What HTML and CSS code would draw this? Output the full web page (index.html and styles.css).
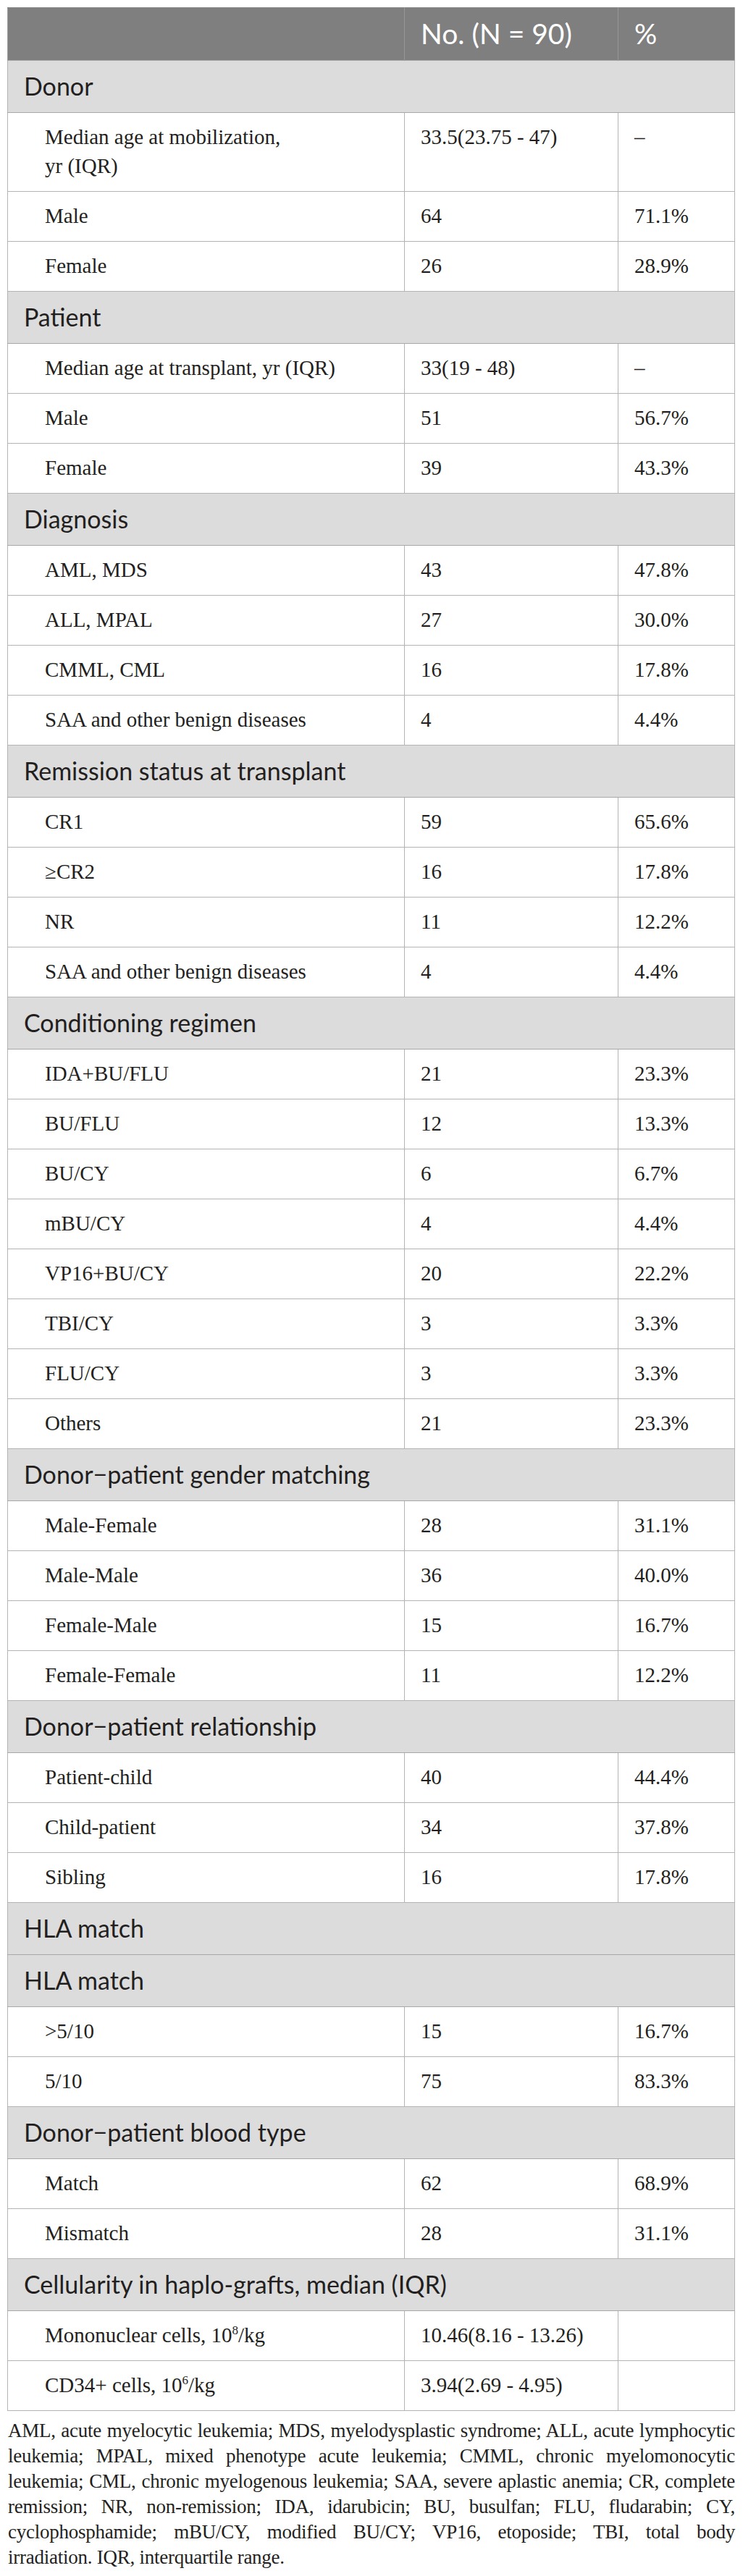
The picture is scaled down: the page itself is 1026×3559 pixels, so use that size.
FILE: index.html
```html
<!DOCTYPE html>
<html lang="en">
<head>
<meta charset="utf-8">
<title>Table</title>
<link rel="stylesheet" href="styles.css">
</head>
<body>
<div class="wrap">
<table class="tbl">
  <thead>
    <tr class="head"><th></th><th>No. (N = 90)</th><th>%</th></tr>
  </thead>
  <tbody>
    <tr class="sec"><td colspan="3">Donor</td></tr>
    <tr><td class="lbl">Median age at mobilization,<br>yr (IQR)</td><td>33.5(23.75 - 47)</td><td>–</td></tr>
    <tr><td class="lbl">Male</td><td>64</td><td>71.1%</td></tr>
    <tr><td class="lbl">Female</td><td>26</td><td>28.9%</td></tr>

    <tr class="sec"><td colspan="3">Patient</td></tr>
    <tr><td class="lbl">Median age at transplant, yr (IQR)</td><td>33(19 - 48)</td><td>–</td></tr>
    <tr><td class="lbl">Male</td><td>51</td><td>56.7%</td></tr>
    <tr><td class="lbl">Female</td><td>39</td><td>43.3%</td></tr>

    <tr class="sec"><td colspan="3">Diagnosis</td></tr>
    <tr><td class="lbl">AML, MDS</td><td>43</td><td>47.8%</td></tr>
    <tr><td class="lbl">ALL, MPAL</td><td>27</td><td>30.0%</td></tr>
    <tr><td class="lbl">CMML, CML</td><td>16</td><td>17.8%</td></tr>
    <tr><td class="lbl">SAA and other benign diseases</td><td>4</td><td>4.4%</td></tr>

    <tr class="sec"><td colspan="3">Remission status at transplant</td></tr>
    <tr><td class="lbl">CR1</td><td>59</td><td>65.6%</td></tr>
    <tr><td class="lbl">≥CR2</td><td>16</td><td>17.8%</td></tr>
    <tr><td class="lbl">NR</td><td>11</td><td>12.2%</td></tr>
    <tr><td class="lbl">SAA and other benign diseases</td><td>4</td><td>4.4%</td></tr>

    <tr class="sec"><td colspan="3">Conditioning regimen</td></tr>
    <tr><td class="lbl">IDA+BU/FLU</td><td>21</td><td>23.3%</td></tr>
    <tr><td class="lbl">BU/FLU</td><td>12</td><td>13.3%</td></tr>
    <tr><td class="lbl">BU/CY</td><td>6</td><td>6.7%</td></tr>
    <tr><td class="lbl">mBU/CY</td><td>4</td><td>4.4%</td></tr>
    <tr><td class="lbl">VP16+BU/CY</td><td>20</td><td>22.2%</td></tr>
    <tr><td class="lbl">TBI/CY</td><td>3</td><td>3.3%</td></tr>
    <tr><td class="lbl">FLU/CY</td><td>3</td><td>3.3%</td></tr>
    <tr><td class="lbl">Others</td><td>21</td><td>23.3%</td></tr>

    <tr class="sec"><td colspan="3">Donor−patient gender matching</td></tr>
    <tr><td class="lbl">Male-Female</td><td>28</td><td>31.1%</td></tr>
    <tr><td class="lbl">Male-Male</td><td>36</td><td>40.0%</td></tr>
    <tr><td class="lbl">Female-Male</td><td>15</td><td>16.7%</td></tr>
    <tr><td class="lbl">Female-Female</td><td>11</td><td>12.2%</td></tr>

    <tr class="sec"><td colspan="3">Donor−patient relationship</td></tr>
    <tr><td class="lbl">Patient-child</td><td>40</td><td>44.4%</td></tr>
    <tr><td class="lbl">Child-patient</td><td>34</td><td>37.8%</td></tr>
    <tr><td class="lbl">Sibling</td><td>16</td><td>17.8%</td></tr>

    <tr class="sec"><td colspan="3">HLA match</td></tr>
    <tr class="sec"><td colspan="3">HLA match</td></tr>
    <tr><td class="lbl">&gt;5/10</td><td>15</td><td>16.7%</td></tr>
    <tr><td class="lbl">5/10</td><td>75</td><td>83.3%</td></tr>

    <tr class="sec"><td colspan="3">Donor−patient blood type</td></tr>
    <tr><td class="lbl">Match</td><td>62</td><td>68.9%</td></tr>
    <tr><td class="lbl">Mismatch</td><td>28</td><td>31.1%</td></tr>

    <tr class="sec"><td colspan="3">Cellularity in haplo-grafts, median (IQR)</td></tr>
    <tr><td class="lbl">Mononuclear cells, 10<sup>8</sup>/kg</td><td>10.46(8.16 - 13.26)</td><td></td></tr>
    <tr><td class="lbl">CD34+ cells, 10<sup>6</sup>/kg</td><td>3.94(2.69 - 4.95)</td><td></td></tr>
  </tbody>
</table>
<p class="note"><span class="ln">AML, acute myelocytic leukemia; MDS, myelodysplastic syndrome; ALL, acute lymphocytic</span> <span class="ln">leukemia; MPAL, mixed phenotype acute leukemia; CMML, chronic myelomonocytic</span> <span class="ln">leukemia; CML, chronic myelogenous leukemia; SAA, severe aplastic anemia; CR, complete</span> <span class="ln">remission; NR, non-remission; IDA, idarubicin; BU, busulfan; FLU, fludarabin; CY,</span> <span class="ln">cyclophosphamide; mBU/CY, modified BU/CY; VP16, etoposide; TBI, total body</span> <span class="ln ln-last">irradiation. IQR, interquartile range.</span></p>
</div>
</body>
</html>
```

FILE: styles.css
```css
html, body {
  margin: 0;
  padding: 0;
  background: #ffffff;
}

.wrap {
  padding: 10px 11px 0 10px;
}

.tbl {
  width: 1005px;
  border-collapse: collapse;
  table-layout: fixed;
  font-family: "Liberation Serif", "Times New Roman", serif;
  font-size: 29px;
  color: #231f20;
}

.tbl th:nth-child(1), .tbl td:nth-child(1) { width: 503px; }
.tbl th:nth-child(2), .tbl td:nth-child(2) { width: 250px; }

.head th {
  background: #7f7f7f;
  color: #ffffff;
  font-family: "Lato", "Noto Sans", sans-serif;
  font-weight: 400;
  font-size: 39px;
  line-height: 44px;
  text-align: left;
  padding: 13px 22px 15px 22px;
  height: 44px;
  border-left: 1px solid #979797;
  border-right: 1px solid #979797;
  border-top: 1px solid #8a8a8a;
}

.head th:first-child { border-left: 1px solid #a0a0a0; }
.head th:last-child { border-right: 1px solid #a0a0a0; }

.tbl td {
  border: 1px solid #b4b4b4;
  padding: 13px 22px 15px 22px;
  line-height: 40px;
  vertical-align: top;
  text-align: left;
}

.tbl td.lbl {
  padding-left: 51px;
}

.sec td {
  background: #dcdcdc;
  font-family: "Lato", "Noto Sans", sans-serif;
  font-size: 34px;
  line-height: 40px;
  padding: 15px 22px 16px 22px;
  border-top: 1px solid #a8a8a8;
  border-bottom: 1px solid #a8a8a8;
}

.tbl sup {
  font-size: 17px;
  line-height: 0;
  vertical-align: 11px;
}

.note {
  width: 1004px;
  margin: 10px 0 0 1px;
  font-family: "Liberation Serif", "Times New Roman", serif;
  font-size: 27px;
  letter-spacing: -0.25px;
  line-height: 35px;
  color: #231f20;
}

.ln {
  display: block;
  white-space: nowrap;
  text-align: justify;
  text-align-last: justify;
}

.ln-last {
  text-align-last: left;
}
```
